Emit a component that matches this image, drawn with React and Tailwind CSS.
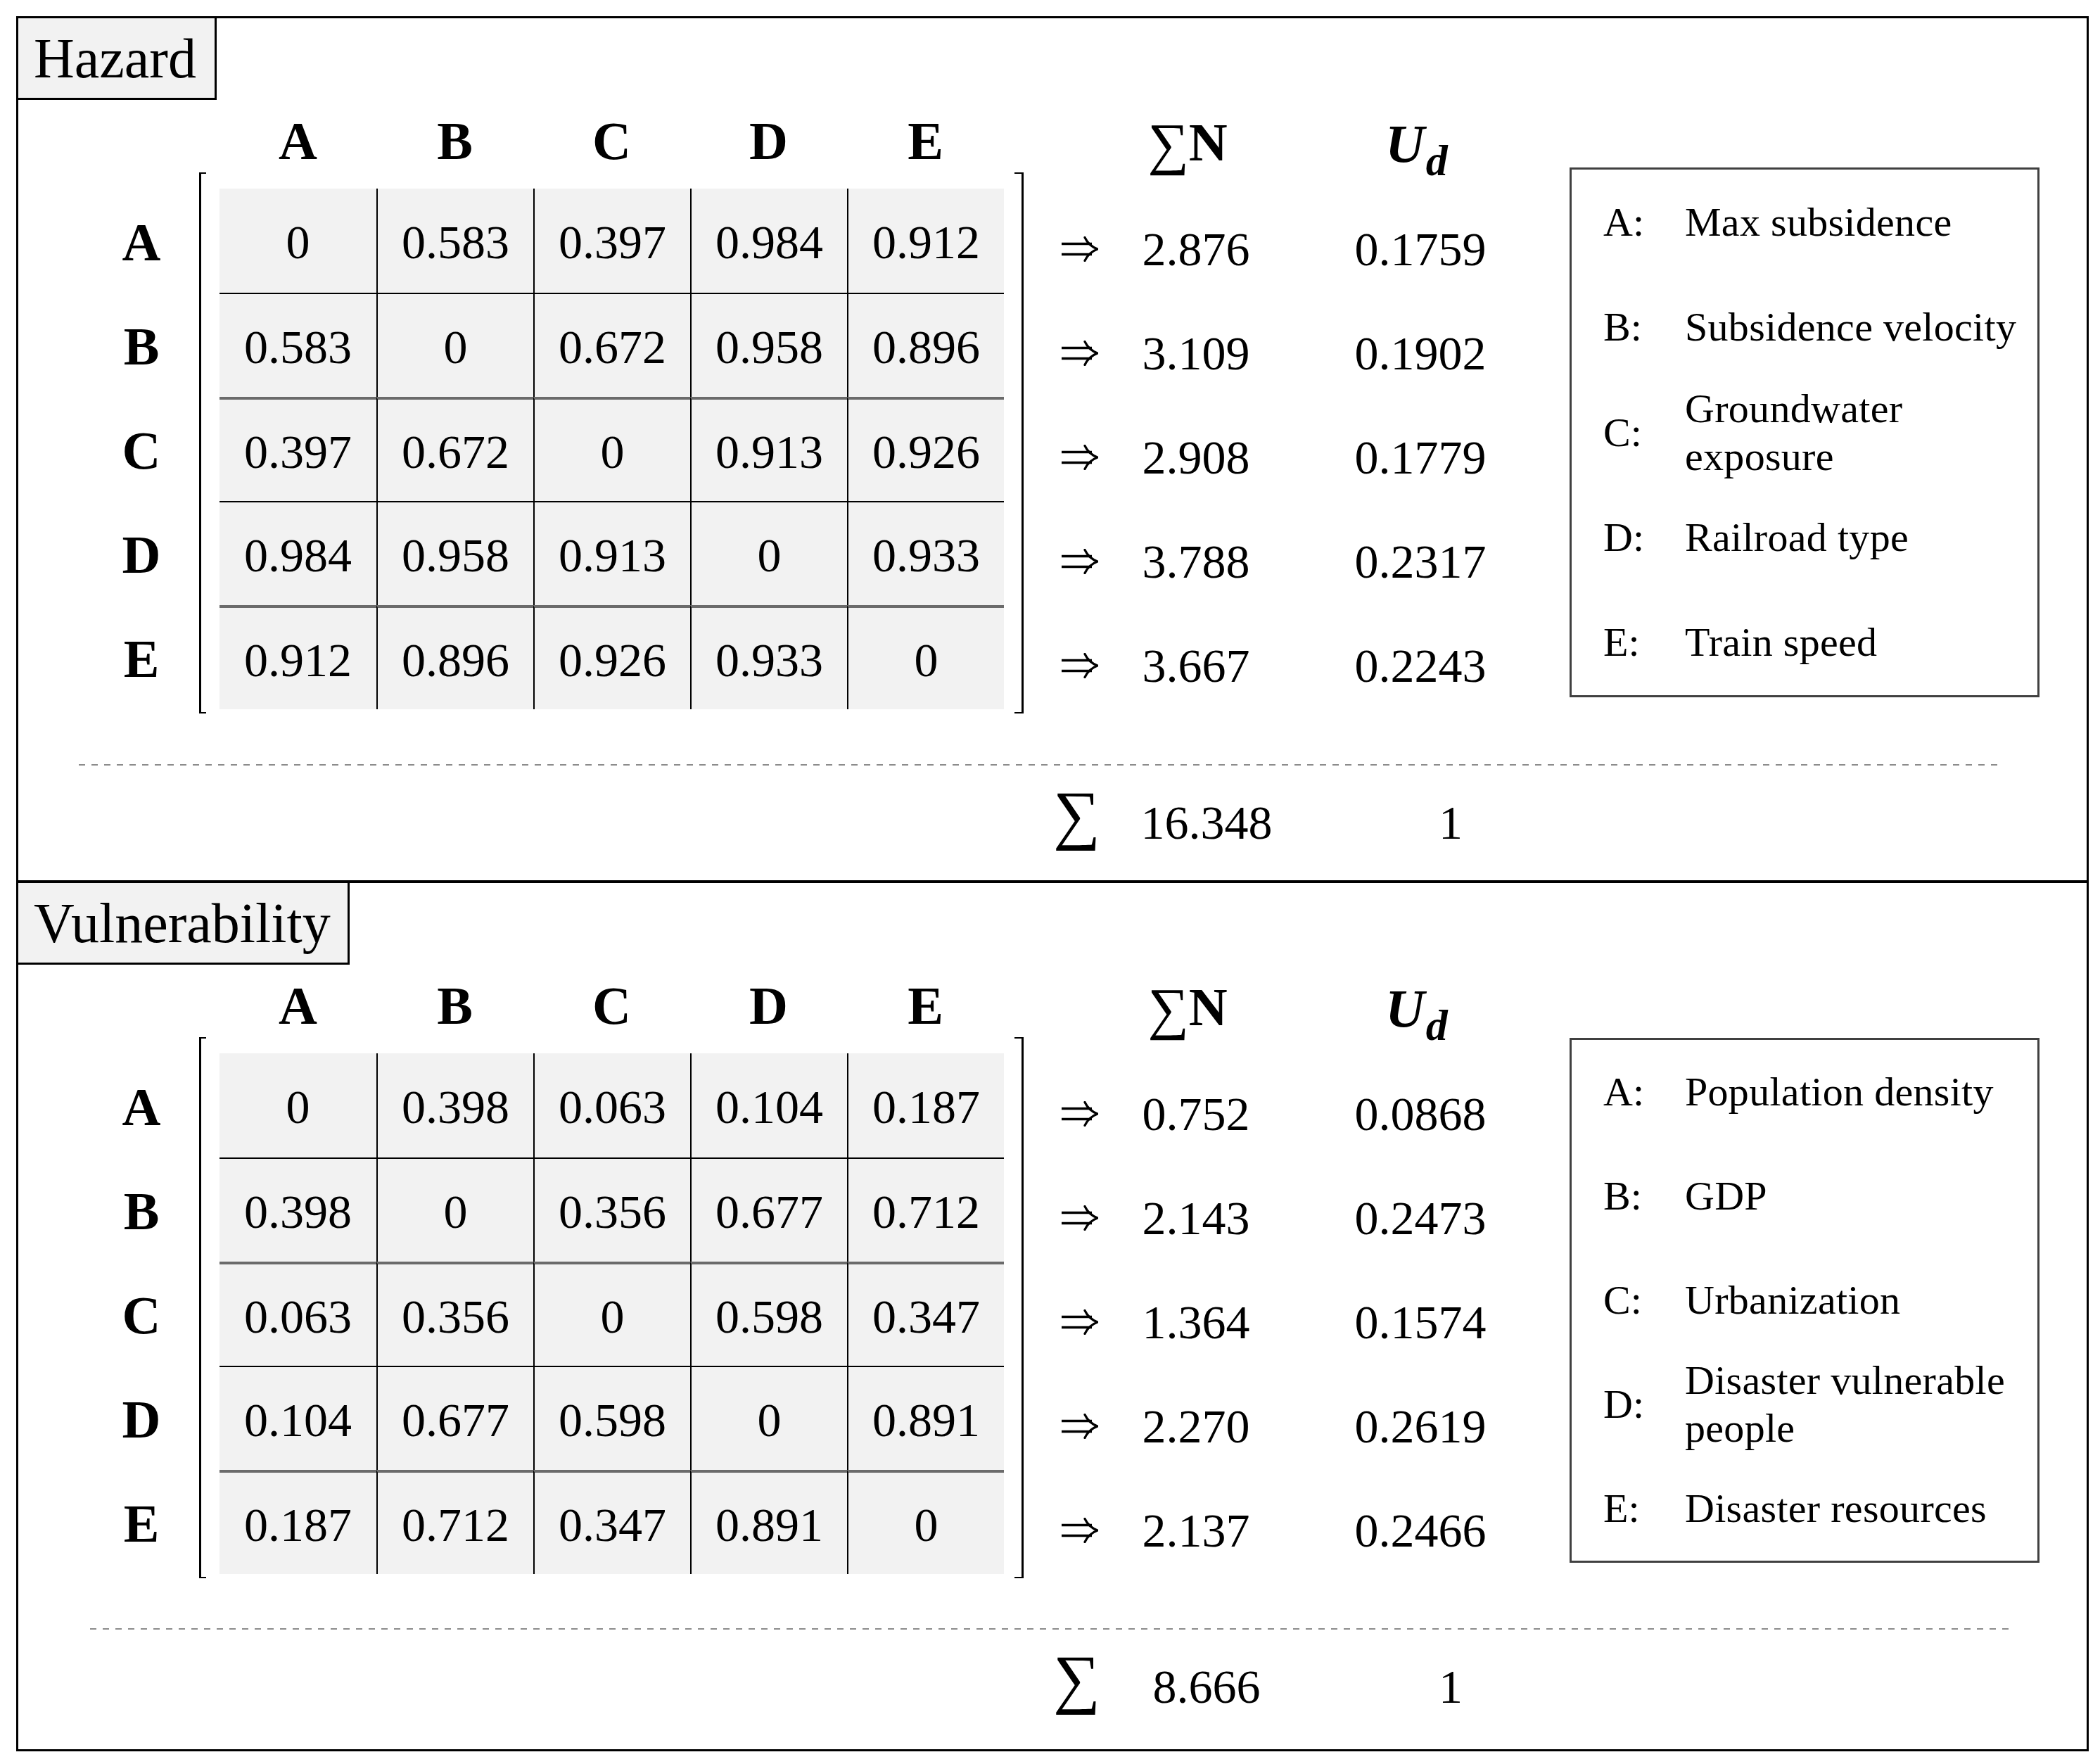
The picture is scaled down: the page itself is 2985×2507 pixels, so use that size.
import React from "react";

const LETTERS = ["A", "B", "C", "D", "E"];

const SECTIONS = [
  {
    title: "Hazard",
    titleW: "w-[282px]",
    height: "h-[1229px] border-b-4 border-black",
    matrix: [
      ["0", "0.583", "0.397", "0.984", "0.912"],
      ["0.583", "0", "0.672", "0.958", "0.896"],
      ["0.397", "0.672", "0", "0.913", "0.926"],
      ["0.984", "0.958", "0.913", "0", "0.933"],
      ["0.912", "0.896", "0.926", "0.933", "0"],
    ],
    sums: ["2.876", "3.109", "2.908", "3.788", "3.667"],
    uds: ["0.1759", "0.1902", "0.1779", "0.2317", "0.2243"],
    total: "16.348",
    legend: [["Max subsidence"], ["Subsidence velocity"], ["Groundwater", "exposure"], ["Railroad type"], ["Train speed"]],
    legendBox: "mt-[96px] h-[753px]",
    dash: "ml-[86px] mt-[66px] w-[2734px]",
  },
  {
    title: "Vulnerability",
    titleW: "w-[471px]",
    height: "h-[1231px]",
    matrix: [
      ["0", "0.398", "0.063", "0.104", "0.187"],
      ["0.398", "0", "0.356", "0.677", "0.712"],
      ["0.063", "0.356", "0", "0.598", "0.347"],
      ["0.104", "0.677", "0.598", "0", "0.891"],
      ["0.187", "0.712", "0.347", "0.891", "0"],
    ],
    sums: ["0.752", "2.143", "1.364", "2.270", "2.137"],
    uds: ["0.0868", "0.2473", "0.1574", "0.2619", "0.2466"],
    total: "8.666",
    legend: [["Population density"], ["GDP"], ["Urbanization"], ["Disaster vulnerable", "people"], ["Disaster resources"]],
    legendBox: "mt-[104px] h-[746px]",
    dash: "ml-[102px] mt-[65px] w-[2735px]",
  },
];

function Arrow() {
  return (
    <svg width="52" height="36" viewBox="0 0 52 36" fill="none" stroke="black">
      <path d="M0 10.5H43M0 25.5H43" strokeWidth="3.5" />
      <path d="M33 1.5C37 10 43 15 51 18C43 21 37 26 33 34.5" strokeWidth="3.2" strokeLinecap="round" />
    </svg>
  );
}

function cellClass(r, c) {
  let cls = "h-[148px] flex items-center justify-center bg-[#f2f2f2] text-[68px] leading-none";
  if (r === 1 || r === 3) cls += " border-t-2 border-t-black";
  if (r === 2 || r === 4) cls += " border-t-4 border-t-[#6b6b6b]";
  if (c > 0) cls += " border-l-2 border-l-black";
  return cls;
}

function Section({ s }) {
  return (
    <section className={`flex flex-col ${s.height}`}>
      {/* title tab */}
      <div className={`${s.titleW} h-[116px] shrink-0 bg-[#f2f2f2] border-r-[3px] border-b-[3px] border-black pl-[22px] pt-[17px]`}>
        <div className="text-[80px] leading-none">{s.title}</div>
      </div>

      <div className="flex items-start">
        {/* row labels */}
        <div className="ml-[125px] w-[100px] pt-[128px] flex flex-col">
          {LETTERS.map((l) => (
            <div key={l} className="h-[148px] flex items-center justify-center text-[76px] font-bold leading-none">
              {l}
            </div>
          ))}
        </div>

        {/* headers + bracketed matrix */}
        <div className="ml-[32px] flex flex-col">
          <div className="ml-[29px] w-[1115px] h-[103px] grid grid-cols-5">
            {LETTERS.map((l) => (
              <div key={l} className="pt-[20px] text-center text-[76px] font-bold leading-none">
                {l}
              </div>
            ))}
          </div>
          <div className="flex h-[769px]">
            <div className="w-[10px] border-l-[3px] border-y-2 border-black" />
            <div className="ml-[19px] mt-[23px] w-[1115px] self-start grid grid-cols-5">
              {s.matrix.map((row, r) =>
                row.map((v, c) => (
                  <div key={`${r}-${c}`} className={cellClass(r, c)}>
                    <span className="pt-[3px]">{v}</span>
                  </div>
                ))
              )}
            </div>
            <div className="ml-[15px] w-[13px] border-r-[3px] border-y-2 border-black" />
          </div>
        </div>

        {/* arrows */}
        <div className="ml-[54px] w-[52px] pt-[138px] flex flex-col">
          {s.sums.map((v, i) => (
            <div key={i} className="h-[148px] flex items-center">
              <Arrow />
            </div>
          ))}
        </div>

        {/* sum N */}
        <div className="ml-[39px] w-[200px] flex flex-col">
          <div className="h-[103px] pt-[22px] pr-[24px] text-center text-[76px] font-bold leading-none whitespace-nowrap">
            <span className="font-normal text-[82px] align-[-4px]">∑</span>N
          </div>
          <div className="mt-[35px] flex flex-col">
            {s.sums.map((v, i) => (
              <div key={i} className="h-[148px] flex items-center justify-center text-[68px] leading-none">
                {v}
              </div>
            ))}
          </div>
        </div>

        {/* U_d */}
        <div className="ml-[119px] w-[200px] flex flex-col">
          <div className="h-[103px] pt-[24px] pr-[11px] text-center font-bold italic leading-none whitespace-nowrap">
            <span className="text-[77px]">U</span>
            <span className="text-[62px] align-[-19px] ml-[2px]">d</span>
          </div>
          <div className="mt-[35px] flex flex-col">
            {s.uds.map((v, i) => (
              <div key={i} className="h-[148px] flex items-center justify-center text-[68px] leading-none">
                {v}
              </div>
            ))}
          </div>
        </div>

        {/* legend */}
        <div className={`ml-[112px] w-[668px] ${s.legendBox} border-[3px] border-[#404040] flex flex-col`}>
          {s.legend.map((lines, i) => (
            <div key={i} className="flex-1 flex items-center text-[58px] leading-[68px]">
              <div className="ml-[45px] w-[116px] shrink-0">{LETTERS[i]}:</div>
              <div className="whitespace-nowrap tracking-[0.3px]">
                {lines.map((t, j) => (
                  <div key={j}>{t}</div>
                ))}
              </div>
            </div>
          ))}
        </div>
      </div>

      {/* dashed separator */}
      <div className={`${s.dash} h-[2px] bg-[repeating-linear-gradient(to_right,#8c8c8c_0_9px,transparent_9px_18px)]`} />

      {/* totals */}
      <div className="flex items-start mt-[22px]">
        <div className="ml-[1471px] w-[66px] text-center text-[94px] leading-none">∑</div>
        <div className="ml-[52px] w-[200px] mt-[25px] text-center text-[68px] leading-none">{s.total}</div>
        <div className="ml-[197px] w-[100px] mt-[25px] text-center text-[68px] leading-none">1</div>
      </div>
    </section>
  );
}

export default function App() {
  return (
    <div className="w-[2985px] h-[2507px] bg-white pt-[23px] pl-[23px] font-['Liberation_Serif',serif] text-black">
      <div className="w-[2946px] border-[3px] border-black flex flex-col">
        {SECTIONS.map((s) => (
          <Section key={s.title} s={s} />
        ))}
      </div>
    </div>
  );
}
